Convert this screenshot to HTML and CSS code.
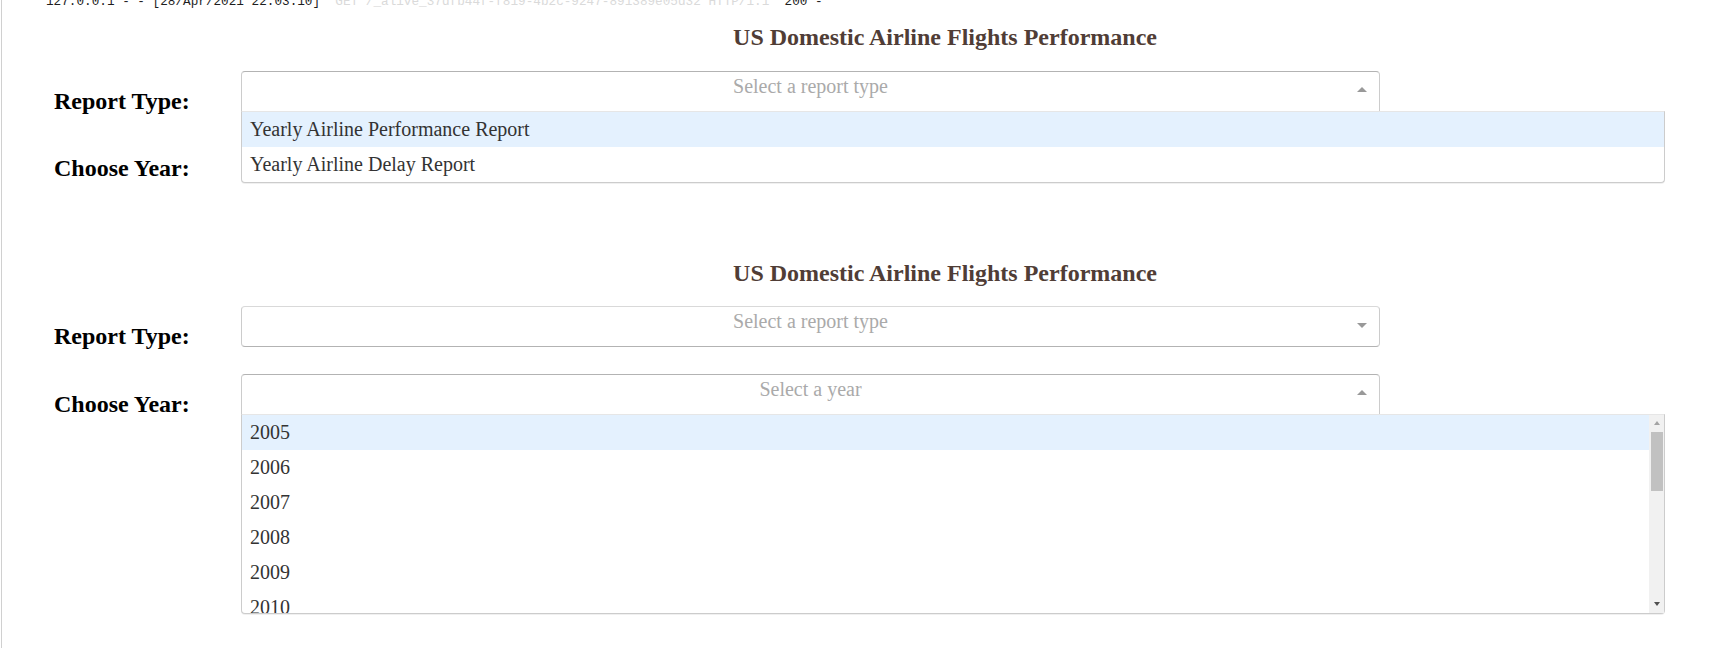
FILE: index.html
```html
<!DOCTYPE html>
<html lang="en">
<head>
<meta charset="utf-8">
<title>US Domestic Airline Flights Performance</title>
<link rel="stylesheet" href="styles.css">
</head>
<body>
<div class="frame">
  <div class="log"><div class="log-line"><span class="log-dark">127.0.0.1 - - [28/Apr/2021 22:03:10] </span><span class="log-light">"GET /_alive_37dfb44f-f819-4b2c-9247-891389e05d32 HTTP/1.1"</span><span class="log-dark"> 200 -</span></div></div>
  <div class="app">
    <section class="section">
      <h1 class="title">US Domestic Airline Flights Performance</h1>
      <div class="row">
        <h2 class="label">Report Type:</h2>
        <div class="dropdown">
          <div class="select is-open">
            <div class="control">
              <div class="placeholder">Select a report type</div>
              <span class="arrow-zone"><span class="arrow"></span></span>
            </div>
            <div class="menu">
              <div class="menu-list">
                <div class="option is-focused">Yearly Airline Performance Report</div>
                <div class="option">Yearly Airline Delay Report</div>
              </div>
            </div>
          </div>
        </div>
      </div>
      <div class="row">
        <h2 class="label">Choose Year:</h2>
        <div class="dropdown">
          <div class="select">
            <div class="control">
              <div class="placeholder">Select a year</div>
              <span class="arrow-zone"><span class="arrow"></span></span>
            </div>
          </div>
        </div>
      </div>
    </section>

    <section class="section">
      <h1 class="title">US Domestic Airline Flights Performance</h1>
      <div class="row">
        <h2 class="label">Report Type:</h2>
        <div class="dropdown">
          <div class="select">
            <div class="control">
              <div class="placeholder">Select a report type</div>
              <span class="arrow-zone"><span class="arrow"></span></span>
            </div>
          </div>
        </div>
      </div>
      <div class="row">
        <h2 class="label">Choose Year:</h2>
        <div class="dropdown">
          <div class="select is-open">
            <div class="control">
              <div class="placeholder">Select a year</div>
              <span class="arrow-zone"><span class="arrow"></span></span>
            </div>
            <div class="menu">
              <div class="menu-list">
                <div class="option is-focused">2005</div>
                <div class="option">2006</div>
                <div class="option">2007</div>
                <div class="option">2008</div>
                <div class="option">2009</div>
                <div class="option">2010</div>
                <div class="option">2011</div>
                <div class="option">2012</div>
                <div class="option">2013</div>
                <div class="option">2014</div>
                <div class="option">2015</div>
                <div class="option">2016</div>
                <div class="option">2017</div>
                <div class="option">2018</div>
                <div class="option">2019</div>
                <div class="option">2020</div>
              </div>
              <div class="scrollbar">
                <div class="sb-btn"><span class="sb-up"></span></div>
                <div class="sb-thumb"></div>
                <div class="sb-track"></div>
                <div class="sb-btn"><span class="sb-down"></span></div>
              </div>
            </div>
          </div>
        </div>
      </div>
    </section>
  </div>
</div>
</body>
</html>
```

FILE: styles.css
```css
html, body {
  margin: 0;
  padding: 0;
  overflow: hidden;
  background: #fff;
}

body {
  width: 1719px;
  height: 648px;
  font-family: "Liberation Serif", "Times New Roman", serif;
}

.frame {
  margin-left: 1px;
  border-left: 1px solid #d0d0d0;
  height: 648px;
}

/* server log line, cut off at the top */
.log {
  height: 8px;
  overflow: hidden;
  padding-left: 44px;
  font-family: "Liberation Mono", "DejaVu Sans Mono", monospace;
  font-size: 12.7px;
  white-space: pre;
}

.log-line {
  line-height: 15px;
  margin-top: -6px;
}

.log-dark {
  color: #1e1e1e;
}

.log-light {
  color: #dadada;
}

/* dash app */
.app {
  padding-left: 52px;
}

.section {
  display: flow-root;
}

.section + .section {
  margin-top: 41px;
}

.title {
  margin: 16px 0;
  padding-left: 117px;
  font-size: 24px;
  line-height: 27.6px;
  font-weight: bold;
  text-align: center;
  color: #503D36;
}

.row {
  display: flex;
}

.label {
  flex: 0 0 136px;
  margin: 20px 48px 20px 0;
  font-size: 24px;
  line-height: 27.6px;
  font-weight: bold;
  color: #000;
  white-space: nowrap;
}

.dropdown {
  width: 1145px;
  box-sizing: border-box;
  padding: 3px;
  font-size: 20px;
}

.select {
  position: relative;
}

.control {
  display: grid;
  grid-template-columns: 1fr;
  grid-template-rows: 1fr;
  height: 41px;
  box-sizing: border-box;
  border: 1px solid #ccc;
  border-color: #d9d9d9 #ccc #b3b3b3;
  border-radius: 4px;
  background: #fff;
}

.is-open > .control {
  border-color: #b3b3b3 #ccc #d9d9d9;
  border-radius: 4px 4px 0 0;
}

.placeholder {
  grid-area: 1 / 1;
  padding: 0 10px;
  line-height: 29px;
  text-align: center;
  color: #aaa;
  white-space: nowrap;
}

.arrow-zone {
  grid-area: 1 / 1;
  justify-self: end;
  align-self: center;
  width: 25px;
  padding-right: 5px;
  display: flex;
  justify-content: center;
}

.arrow {
  display: block;
  width: 0;
  height: 0;
  border-style: solid;
  border-width: 5px 5px 2.5px;
  border-color: #999 transparent transparent;
}

.is-open .arrow {
  border-width: 0 5px 5px;
  border-color: transparent transparent #999;
  margin-top: -4px;
}

/* open menu overlay */
.menu {
  position: absolute;
  top: 100%;
  left: 0;
  z-index: 1;
  margin-top: -1px;
  width: 1424px;
  max-height: 200px;
  box-sizing: border-box;
  display: flex;
  border: 1px solid #ccc;
  border-top-color: #e6e6e6;
  border-radius: 0 0 4px 4px;
  background: #fff;
  box-shadow: 0 1px 0 rgba(0, 0, 0, 0.06);
}

.menu-list {
  flex: 1;
  max-height: 198px;
  overflow: hidden;
}

.option {
  padding: 8px;
  line-height: 19px;
  color: #333;
  text-align: left;
  white-space: nowrap;
}

.option.is-focused {
  background: #e4f1fe;
}

/* scrollbar of the year list */
.scrollbar {
  width: 15px;
  box-sizing: border-box;
  padding: 0 1px 0 2px;
  background: #f1f1f1;
  display: flex;
  flex-direction: column;
}

.sb-btn {
  height: 17px;
  display: flex;
  align-items: center;
  justify-content: center;
}

.sb-up {
  width: 0;
  height: 0;
  border-style: solid;
  border-width: 0 3.5px 4px;
  border-color: transparent transparent #a3a3a3;
}

.sb-down {
  width: 0;
  height: 0;
  border-style: solid;
  border-width: 4px 3.5px 0;
  border-color: #505050 transparent transparent;
}

.sb-thumb {
  height: 59px;
  background: #c1c1c1;
}

.sb-track {
  flex: 1;
}
```
